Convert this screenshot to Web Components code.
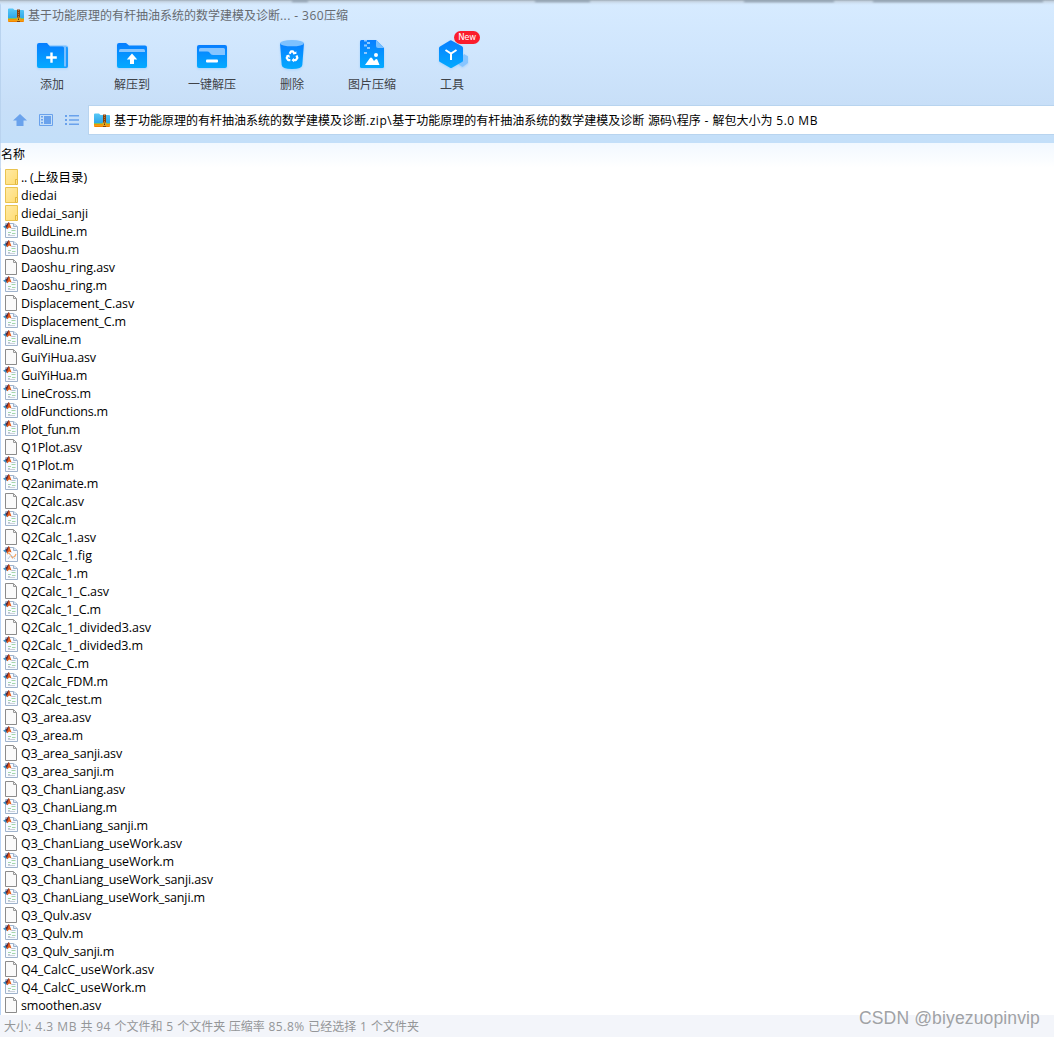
<!DOCTYPE html>
<html lang="zh-CN">
<head>
<meta charset="utf-8">
<title>360压缩</title>
<style>
html,body{margin:0;height:100%;overflow:hidden;background:#fff}
body{font:12px/18px "Open Sans","Noto Sans CJK SC",sans-serif;color:#000}
</style>
</head>
<body>
<archive-window></archive-window>
<script>
const folderZip = `<svg width="16" height="14" viewBox="0 0 16 14"><defs><linearGradient id="z" x2="0" y2="1"><stop stop-color="#58c8f6"/><stop offset="1" stop-color="#229de5"/></linearGradient></defs><path d="M0 1.5Q0 .5 1 .5H5L6.5 2H15Q16 2 16 3V13H0Z" fill="url(#z)"/><path d="M0 11H16V13Q16 14 15 14H1Q0 14 0 13Z" fill="#f08200"/><path d="M0 10H16V11H0Z" fill="#7dc45b"/><path d="M0 11.8H16V12.4H0Z" fill="#ffc928"/><path d="M9 1.5H12V14H9Z" fill="#86410d"/><path d="M10 2H11V3H10ZM10 4H11V5H10ZM10 6H11V7H10ZM10 8H11V9H10Z" fill="#b9773a"/><path d="M8.5 9.5H12.5V13H8.5Z" fill="#e2a51d"/><path d="M10 10.5H11V12H10Z" fill="#60340b"/></svg>`;
const grad = `<defs><linearGradient id="g" x2="0" y2="1"><stop stop-color="#087eff"/><stop offset="1" stop-color="#03aaff"/></linearGradient></defs>`;
const svg = body => `<svg width="48" height="40" viewBox="0 0 48 40">${grad}${body}</svg>`;
const toolIcons = {
add: svg(`<path d="M20 10.5H38Q40 10.5 40 12.5V31Q40 33 38 33H20Z" fill="#79bfff"/><path d="M39 12Q40 12 40 14V31Q40 33 38 33H35V31.5H38V12Z" fill="#1c9aff"/><path d="M9 10Q9 8 11 8H19L22 11.5H34.5Q36 11.5 36 13V31Q36 33 38 33H11Q9 33 9 31Z" fill="url(#g)"/><path d="M22.3 17.5H24.7V21.3H28.8V23.7H24.7V27.8H22.3V23.7H18.2V21.3H22.3Z" fill="#fff"/>`),
extract: svg(`<path d="M9 10Q9 8 11 8H18L21 10.5H37Q39 10.5 39 12.5V31Q39 33 37 33H11Q9 33 9 31Z" fill="url(#g)"/><path d="M11 15.5Q11 14 12.5 14H35.5Q37 14 37 15.5V17H11Z" fill="#86c5ff"/><path d="M24 18.5L29.2 24.5H26V29H22V24.5H18.8Z" fill="#fff"/>`),
quick: svg(`<rect x="9" y="10" width="30" height="23" rx="2" fill="url(#g)"/><path d="M11 14.5Q11 13 12.5 13H35.5Q37 13 37 14.5V20H25Q23 20 21.5 17.5Q21 16.5 19 16.5H11Z" fill="#86c5ff"/><rect x="18" y="24.5" width="12" height="3" rx="1" fill="#fff"/>`),
remove: svg(`<path d="M12 8H36L34.3 30Q34 34 24 34Q14 34 13.7 30Z" fill="url(#g)"/><ellipse cx="24" cy="8.2" rx="12" ry="3.1" fill="#7dc1ff"/><g transform="translate(1.2 -.5) scale(.95)"><path d="M21.5 20.3L23 17.8H25L26.8 20.6M28.7 22.1L29.7 24.6L28 27H25.5M22.3 27H20L18.4 24.7L20 21.8" fill="none" stroke="#fff" stroke-width="2.3" stroke-linejoin="round"/><path d="M25 20.5H28.7L28.5 17.7ZM26 24.5V29.3L23.5 27ZM17.2 22.5L21 21.1L22 24.4Z" fill="#fff"/></g>`),
image: svg(`<path d="M12 6.5Q12 5 13.5 5H28L36 13V31.5Q36 33 34.5 33H13.5Q12 33 12 31.5Z" fill="url(#g)"/><path d="M28 5L36 13H30Q28 13 28 11Z" fill="#79bfff"/><path d="M16 5H19V6.5H16ZM19 7H22V9H19ZM16 9.5H19V11.5H16ZM19 12H22V14H19ZM16 17H19V19H16Z" fill="#8dc8ff"/><path d="M17 30L22 23Q23 21.8 24 23L26 26L27.7 24.3Q28.5 23.5 29.3 24.5L31.5 30Z" fill="#fff"/><circle cx="28" cy="20" r="2" fill="#fff"/>`),
tools: svg(`<path d="M36 19L40 21.3V28L34.5 32L30 29Z" fill="#87c5ff"/><path d="M23 5.2L34 11.3Q35 12 35 13V25.5Q35 26.5 34 27.1L24 32.7Q23 33.3 22 32.7L12 27.1Q11 26.5 11 25.5V13Q11 12 12 11.4L22 5.6Z" fill="url(#g)"/><path d="M17.5 15L23 18.5L28.5 15M23 18.5V25" fill="none" stroke="#fff" stroke-width="2"/>`)
};
const matlab = `<path d="M2.5 1.5H10.5L14.5 4.5V15.5H2.5Z" fill="#f8fbff" stroke="#9fb3cc"/><path d="M10.5 1.5V4.5H14" fill="#dbe6f4" stroke="#9fb3cc"/>`;
const peak = `<path d="M0 4.8L3 3L5.4 1V6L3 6.8Z" fill="#3c8fc5"/><path d="M2.5 4L5.8 0L6.4 2L4.3 7Z" fill="#632633"/><path d="M5.8 0Q6.7 1 8.5 6.5L6 5.5L4.4 7.3L3.5 5.8Q5 5 5.8 0Z" fill="#e45b18"/>`;
const fileSvg = b => `<svg width="16" height="17" viewBox="0 0 16 17">${b}</svg>`;
const fileIcons = {
d: fileSvg(`<defs><linearGradient id="f" x2="1" y2="1"><stop stop-color="#ffeaa6"/><stop offset="1" stop-color="#ffdc72"/></linearGradient></defs><path d="M2.5 .5H14.5V10.5H12.5V15.5H2.5Z" fill="url(#f)" stroke="#e9c350"/><path d="M12.5 10.5H14.5V15.5H12.5Z" fill="#ffe48b" stroke="#e2b83f"/>`),
a: fileSvg(`<path d="M2.5 .5H10.5L13.5 3.5V15.5H2.5Z" fill="#fafafa" stroke="#8b8b8b"/><path d="M10.5 1V3.5H13" fill="#eee" stroke="#999"/>`),
m: fileSvg(matlab+`<path d="M8.5 6.5H12.5M5 12.5H7" stroke="#b6c4d4"/><path d="M8.5 8.5H12.5M5 10.5H8M9 11.5H12.5" stroke="#a5d6aa"/><path d="M5 13.5H12" stroke="#ccd2da"/>`+peak),
f: fileSvg(matlab+`<path d="M4 8L6 7L9.5 12L12 10L13 8" fill="none" stroke="#f6a361" stroke-width="1.2"/><path d="M5 13L8 9L12 13" fill="none" stroke="#bbcddd"/>`+peak)
};
const files = `d|.. (上级目录)|87
d|diedai|57
d|diedai_sanji|88
m|BuildLine.m|87
m|Daoshu.m|79
a|Daoshu_ring.asv|115
m|Daoshu_ring.m|107
a|Displacement_C.asv|134
m|Displacement_C.m|126
m|evalLine.m|81
a|GuiYiHua.asv|96
m|GuiYiHua.m|87
m|LineCross.m|91
m|oldFunctions.m|108
m|Plot_fun.m|80
a|Q1Plot.asv|82
m|Q1Plot.m|74
m|Q2animate.m|98
a|Q2Calc.asv|84
m|Q2Calc.m|76
a|Q2Calc_1.asv|96
f|Q2Calc_1.fig|92
m|Q2Calc_1.m|88
a|Q2Calc_1_C.asv|109
m|Q2Calc_1_C.m|101
a|Q2Calc_1_divided3.asv|151
m|Q2Calc_1_divided3.m|143
m|Q2Calc_C.m|89
m|Q2Calc_FDM.m|108
m|Q2Calc_test.m|102
a|Q3_area.asv|91
m|Q3_area.m|83
a|Q3_area_sanji.asv|122
m|Q3_area_sanji.m|114
a|Q3_ChanLiang.asv|125
m|Q3_ChanLiang.m|117
m|Q3_ChanLiang_sanji.m|148
a|Q3_ChanLiang_useWork.asv|182
m|Q3_ChanLiang_useWork.m|174
a|Q3_ChanLiang_useWork_sanji.asv|213
m|Q3_ChanLiang_useWork_sanji.m|205
a|Q3_Qulv.asv|91
m|Q3_Qulv.m|83
m|Q3_Qulv_sanji.m|114
a|Q4_CalcC_useWork.asv|154
m|Q4_CalcC_useWork.m|146
a|smoothen.asv|101`.split('\n').map(r => r.split('|'));

/* A single line of text of a given width; only its Latin runs are tracked. */
class FitText extends HTMLElement {
  connectedCallback() {
    this.attachShadow({mode:'open'}).innerHTML = `<style>:host{display:block;white-space:pre}.line{display:inline-block}</style><span class="line"></span>`;
    const line = this.shadowRoot.querySelector('.line');
    let latin = 0;
    const runs = [];
    for (const part of this.getAttribute('text').match(/[\u4e00-\u9fff]+|[^\u4e00-\u9fff]+/g)) {
      const run = document.createElement('span');
      run.textContent = part;
      if (part.charCodeAt(0) < 256) { latin += part.length; runs.push(run); }
      line.append(run);
    }
    const w = +this.getAttribute('width');
    const gap = (w - line.getBoundingClientRect().width) / latin;
    for (const run of runs) run.style.letterSpacing = gap + 'px';
  }
}
class ToolButton extends HTMLElement {
  connectedCallback() {
    this.attachShadow({mode:'open'}).innerHTML = `<style>:host{display:flex;flex-direction:column;align-items:center;width:80px;position:relative;color:#404348}svg{display:block;filter:drop-shadow(0 1px 1px #5bb0ff55)}.label{line-height:18px;margin-top:1px}.badge{position:absolute;left:42px;top:-4px;width:26px;height:13px;border-radius:7px;background:#fb1d2c;color:#fff;font:8.5px/13px "DejaVu Sans",sans-serif;letter-spacing:-.3px;text-align:center}</style>${toolIcons[this.getAttribute('icon')]}<div class="label"><slot></slot></div>${this.hasAttribute('badge') ? `<div class="badge">${this.getAttribute('badge')}</div>` : ''}`;
  }
}
class FileRow extends HTMLElement {
  connectedCallback() {
    const [k, n, e] = files[+this.getAttribute('index')];
    this.attachShadow({mode:'open'}).innerHTML = `<style>:host{display:flex;height:18px;align-items:flex-start}svg{display:block;margin:${k === 'm' || k === 'f' ? 0 : 1}px 2px 0 3px;flex:none}fit-text{font-size:12.5px;line-height:18px;padding-top:1px}</style>${fileIcons[k]}<fit-text text="${n}" width="${e-21}"></fit-text>`;
  }
}
class TitleBar extends HTMLElement {
  connectedCallback() {
    this.attachShadow({mode:'open'}).innerHTML = `<style>:host{display:flex;height:32px;align-items:center;color:#666a70;background:linear-gradient(#98a5b1 0,#bfccd9 1px,#cfe1f3 3px,transparent 5px)}svg{margin:0 4px 2px 8px}</style>${folderZip}<fit-text text="基于功能原理的有杆抽油系统的数学建模及诊断... - 360压缩" width="320"></fit-text>`;
  }
}
class AddressBar extends HTMLElement {
  connectedCallback() {
    this.attachShadow({mode:'open'}).innerHTML = `<style>:host{display:flex;height:30px;align-items:center;margin-top:-1px}.nav{display:flex;width:88px;padding-left:12px;box-sizing:border-box;gap:10px;flex:none}.box{flex:1;height:30px;background:#fff;border:1px solid #b8d4ef;border-right:0;box-sizing:border-box;display:flex;align-items:center}.box svg{margin:0 4px 0 5px}.box fit-text{padding-top:1px}</style><div class="nav"><svg width="16" height="16" viewBox="0 0 16 16"><path d="M8 2L15 8.5H11.5V14H4.5V8.5H1Z" fill="#6aa2ec"/></svg><svg width="16" height="16" viewBox="0 0 16 16"><path d="M1.5 2.5H14.5V13.5H1.5Z" fill="none" stroke="#6aa2ec"/><path d="M3 4H5V5.5H3ZM3 7H5V8.5H3ZM3 10H5V11.5H3ZM6 4H13V12H6Z" fill="#6aa2ec"/></svg><svg width="16" height="16" viewBox="0 0 16 16"><path d="M1 3H3V5H1ZM5 3H15V4.5H5ZM1 7H3V9H1ZM5 7.2H15V8.7H5ZM1 11H3V13H1ZM5 11.5H15V13H5Z" fill="#6aa2ec"/></svg></div><div class="box">${folderZip}<fit-text text="基于功能原理的有杆抽油系统的数学建模及诊断.zip\\基于功能原理的有杆抽油系统的数学建模及诊断 源码\\程序 - 解包大小为 5.0 MB" width="704"></fit-text></div>`;
  }
}
class StatusBar extends HTMLElement {
  connectedCallback() {
    this.attachShadow({mode:'open'}).innerHTML = `<style>:host{display:flex;height:22px;padding-left:4px;background:#f3f5fa;color:#949698;align-items:center}fit-text{padding-top:2px}</style><fit-text text="大小: 4.3 MB 共 94 个文件和 5 个文件夹 压缩率 85.8% 已经选择 1 个文件夹" width="415"></fit-text>`;
  }
}
class ArchiveWindow extends HTMLElement {
  connectedCallback() {
    this.attachShadow({mode:'open'}).innerHTML = `<style>
:host{display:flex;flex-direction:column;width:1054px;height:1037px;position:relative}
.chrome{height:143px;box-sizing:border-box;background:linear-gradient(#d7ebff,#d0e6fd 50px,#c8dff8 104px,#c3dff9);box-shadow:inset 1px 0 #b9d3ef;position:relative}
.shade{position:absolute;top:0;height:2px;background:#899aaa;filter:blur(1px)}
.tools{display:flex;height:74px;padding:3px 0 0 12px;box-sizing:border-box}
.columns{height:25px;padding-left:1px;line-height:24px;background:linear-gradient(#f1f8ff,#fff);box-shadow:inset 1px 0 #c9dbf1}
.list{height:847px;display:flex;flex-direction:column;box-shadow:inset 1px 0 #b9d3f5}
.mark{position:absolute;left:859px;top:1007px;font:17.5px/22px "Liberation Sans",sans-serif;color:#a0a2a5;text-shadow:-1px -1px 0 #fff9}
</style><div class="chrome"><i class="shade" style="left:292px;width:16px"></i><i class="shade" style="left:535px;width:55px"></i><i class="shade" style="left:744px;width:90px"></i><i class="shade" style="left:873px;width:170px"></i><title-bar></title-bar><div class="tools"><tool-button icon="add">添加</tool-button><tool-button icon="extract">解压到</tool-button><tool-button icon="quick">一键解压</tool-button><tool-button icon="remove">删除</tool-button><tool-button icon="image">图片压缩</tool-button><tool-button icon="tools" badge="New">工具</tool-button></div><address-bar></address-bar></div><div class="columns">名称</div><div class="list">${files.map((_,i)=>`<file-row index="${i}"></file-row>`).join('')}</div><status-bar></status-bar><fit-text class="mark" text="CSDN @biyezuopinvip" width="181"></fit-text>`;
  }
}
customElements.define('fit-text', FitText);
customElements.define('tool-button', ToolButton);
customElements.define('file-row', FileRow);
customElements.define('title-bar', TitleBar);
customElements.define('address-bar', AddressBar);
customElements.define('status-bar', StatusBar);
customElements.define('archive-window', ArchiveWindow);
</script>
</body>
</html>
